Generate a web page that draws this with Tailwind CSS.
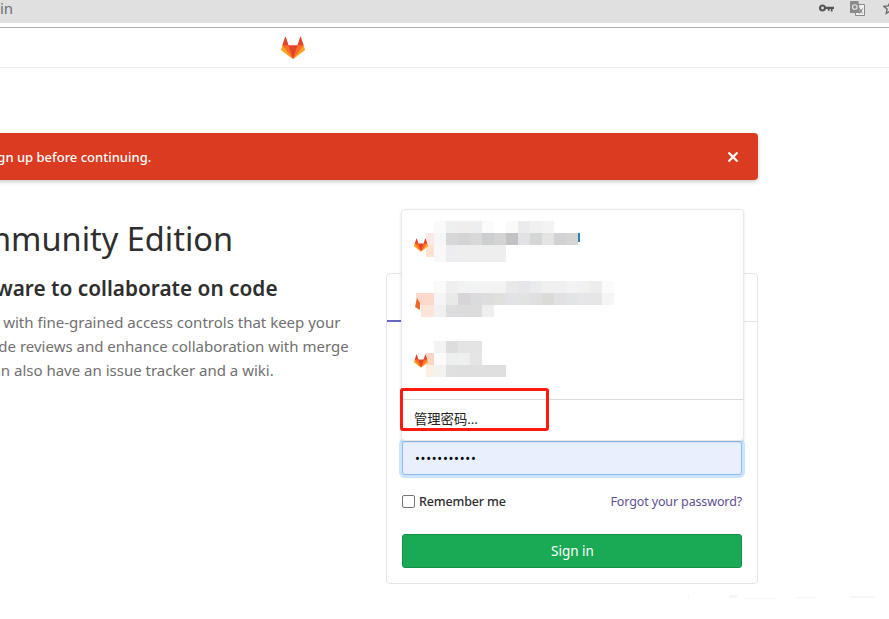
<!DOCTYPE html>
<html lang="en">
<head>
<meta charset="utf-8">
<title>Sign in · GitLab</title>
<script src="https://cdn.jsdelivr.net/npm/@tailwindcss/browser@4"></script>
</head>
<body class="bg-white overflow-hidden w-[889px] h-[619px] relative font-['Noto_Sans','Noto_Sans_CJK_SC',sans-serif] text-[#2e2e2e]">
  <!-- browser toolbar -->
  <div class="h-[23px] bg-[#e0e0e0] flex items-center justify-between">
    <span class="text-[15px] leading-none text-[#6b6f73] pb-[6px]">in</span>
    <div class="flex items-center h-full pb-[7px]">
      <svg class="w-[15px] h-[8px] mr-[16px]" viewBox="0 0 15 8"><circle cx="3.500" cy="4" r="2.500" fill="none" stroke="#555" stroke-width="2.200"/><path d="M6 2.700h9v2.300h-1.400v2.500h-1.800V5h-1.200v1.800H8.800V5H6z" fill="#555"/></svg>
      <svg class="w-[15px] h-[15px] mr-[18px]" viewBox="0 0 15 15"><path d="M5.500 3.500h9v11h-9z" fill="#efefef" stroke="#8a8a8a"/><path d="M0 0h8.500l1.500 12H0z" fill="#8b8b8b"/><circle cx="4.800" cy="6" r="2.300" fill="none" stroke="#e6e6e6" stroke-width="1.100"/><path d="M9.500 7.500l3 5M12.500 7.500l-3 5" stroke="#777" stroke-width="0.900" fill="none"/></svg>
      <svg class="w-[14px] h-[14px] mr-[-8px]" viewBox="0 0 14 14"><path d="M7 1l1.800 4 4.200.4-3.200 2.800 1 4.300L7 10.200 3.200 12.500l1-4.300L1 5.400l4.200-.4z" fill="none" stroke="#666" stroke-width="1.300"/></svg>
    </div>
  </div>
  <div class="h-[4px]"></div>
  <!-- gitlab navbar -->
  <header class="h-[41px] border-t border-t-[#ababab] border-b border-b-[#eeeeee] flex items-center pl-[281px]">
    <svg class="w-[24px] h-[24px]" viewBox="0 0 36 36">
      <path fill="#e24329" d="M2 14l9.380 9v-9l-4-12.280c-.205-.632-1.176-.632-1.380 0z"/>
      <path fill="#e24329" d="M34 14l-9.380 9v-9l4-12.280c.205-.632 1.176-.632 1.380 0z"/>
      <path fill="#e24329" d="M18 34.380 3 14h30z"/>
      <path fill="#fc6d26" d="M18 34.380 11.380 14H2l4 11z"/>
      <path fill="#fc6d26" d="M18 34.380 24.620 14H34l-4 11z"/>
      <path fill="#fca326" d="M2 14L.1 20.160c-.18.565 0 1.200.5 1.560l17.420 12.660z"/>
      <path fill="#fca326" d="M34 14l1.900 6.160c.18.565 0 1.200-.5 1.560L18 34.380z"/>
    </svg>
  </header>
  <!-- alert -->
  <div class="mt-[65px] ml-[-20px] w-[778px] h-[47px] bg-[#db3b21] rounded-[4px] shadow-[0_2px_4px_rgba(0,0,0,0.2)] flex items-center justify-between pr-[19px] text-white text-[13px] font-medium">
    <span class="whitespace-nowrap ml-[-131px] pt-[2px]">You need to sign in or sign up before continuing.</span>
    <svg class="w-[12px] h-[12px]" viewBox="0 0 12 12"><path d="M1.500 1.500l9 9M10.500 1.500l-9 9" stroke="#fff" stroke-width="2.200" fill="none"/></svg>
  </div>
  <main class="flex items-start">
    <!-- left column -->
    <section class="w-[386px] shrink-0 pt-[38px] whitespace-nowrap">
      <h1 class="text-[32.500px] leading-[42px] ml-[-167px]">GitLab Community Edition</h1>
      <h3 class="text-[20.800px] leading-[26px] font-semibold mt-[15px] ml-[-177px]">Open source software to collaborate on code</h3>
      <div class="text-[15px] leading-[24px] text-[#707070] mt-[9px]">
        <p class="ml-[-170px]">Manage Git repositories with fine-grained access controls that keep your</p>
        <p class="ml-[-155px]">code safe. Perform code reviews and enhance collaboration with merge</p>
        <p class="ml-[-174px]">requests. Each project can also have an issue tracker and a wiki.</p>
      </div>
    </section>
    <!-- sign in card -->
    <section class="w-[372px] h-[311px] mt-[93px] shrink-0 border border-[#e5e5e5] rounded-[4px] flex flex-col">
      <div class="h-[48px] shrink-0 border-b border-[#e5e5e5] flex">
        <div class="w-[186px] h-[48px] border-b-2 border-[#6666c4] text-center text-[14px] font-semibold pt-[14px]">Sign in</div>
        <div class="flex-1 text-center text-[14px] pt-[14px]">Register</div>
      </div>
      <form class="flex-1 px-[15px] flex flex-col">
        <div class="mt-[119px] h-[34px] bg-[#e8f0fe] border border-[#8dbcf5] rounded-[3px] shadow-[0_0_0_3px_rgba(128,189,255,0.4)] flex items-center pl-[12px] text-[13px] tracking-[0.700px] leading-none text-black">•••••••••••</div>
        <div class="mt-[17px] flex items-center justify-between text-[12.500px] h-[20px]">
          <label class="flex items-center font-medium text-[#2e2e2e] tracking-[-0.150px]"><span class="w-[13px] h-[13px] border border-[#767676] rounded-[2px] bg-white mr-[4px] mb-[2px]"></span>Remember me</label>
          <a class="text-[#5e4f94] tracking-[-0.130px]">Forgot your password?</a>
        </div>
        <button type="button" class="mt-[22px] h-[34px] bg-[#1aaa55] border border-[#168f48] rounded-[3px] text-white text-[13.500px] pl-[1px]">Sign in</button>
      </form>
    </section>
  </main>

  <!-- password manager popup over the card -->
  <div class="absolute left-[401px] top-[209px] w-[343px] h-[232px] bg-white border border-[#e8e8e8] rounded-[4px] shadow-[0_1px_3px_rgba(0,0,0,0.12)] flex flex-col">
    <div class="h-[190px] shrink-0 border-b border-[#dcdcdc] relative">
      <svg class="absolute left-[-1px] top-[-1px]" width="343" height="190" viewBox="401 209 343 190">
        <g>
          <rect x="434" y="221" width="12" height="12" fill="#fafafa"/><rect x="446" y="221" width="12" height="12" fill="#eef0f0"/><rect x="458" y="221" width="12" height="12" fill="#efeeed"/><rect x="470" y="221" width="12" height="12" fill="#eceef0"/><rect x="482" y="221" width="12" height="12" fill="#fbfbfb"/><rect x="506" y="221" width="12" height="12" fill="#fafaf8"/><rect x="518" y="221" width="12" height="12" fill="#ebebed"/><rect x="530" y="221" width="12" height="12" fill="#f0f0f1"/><rect x="542" y="221" width="12" height="12" fill="#f3f3f3"/>
          <rect x="578" y="233" width="2" height="9" fill="#2b7fb8"/>
          <rect x="426" y="233" width="8" height="12" fill="#fde8e8"/><rect x="434" y="233" width="12" height="12" fill="#f5f6f6"/><rect x="446" y="233" width="12" height="12" fill="#d5d8d7"/><rect x="458" y="233" width="12" height="12" fill="#d4d5d3"/><rect x="470" y="233" width="12" height="12" fill="#d7d8d8"/><rect x="482" y="233" width="12" height="12" fill="#cdcecf"/><rect x="494" y="233" width="12" height="12" fill="#d2d3d3"/><rect x="506" y="233" width="12" height="12" fill="#c2c1c4"/><rect x="518" y="233" width="12" height="12" fill="#e0e2e6"/><rect x="530" y="233" width="12" height="12" fill="#d5d6d6"/><rect x="542" y="233" width="12" height="12" fill="#e4e4e2"/><rect x="554" y="233" width="12" height="12" fill="#d2d2d4"/><rect x="566" y="233" width="12" height="12" fill="#d5d6d4"/>
          <rect x="426" y="245" width="8" height="12" fill="#fde2cf"/><rect x="434" y="245" width="12" height="17" fill="#f8f8f8"/><rect x="446" y="245" width="12" height="17" fill="#ebedf0"/><rect x="458" y="245" width="12" height="17" fill="#eeeeef"/><rect x="470" y="245" width="36" height="17" fill="#eeeeee"/>
        </g>
        <g>
          <rect x="434" y="281" width="12" height="12" fill="#fafafa"/><rect x="446" y="281" width="12" height="12" fill="#eeefee"/><rect x="458" y="281" width="12" height="12" fill="#f1f2f2"/><rect x="470" y="281" width="12" height="12" fill="#f2f3f3"/><rect x="482" y="281" width="12" height="12" fill="#f3f3f3"/><rect x="494" y="281" width="12" height="12" fill="#f3f3f2"/><rect x="506" y="281" width="12" height="12" fill="#e9e9ea"/><rect x="518" y="281" width="12" height="12" fill="#e5e6e9"/><rect x="530" y="281" width="12" height="12" fill="#eaebee"/><rect x="542" y="281" width="12" height="12" fill="#f0f0ee"/><rect x="554" y="281" width="12" height="12" fill="#f0f0f1"/><rect x="566" y="281" width="12" height="12" fill="#f0f2f4"/><rect x="578" y="281" width="12" height="12" fill="#f1f1f0"/><rect x="590" y="281" width="12" height="12" fill="#ededee"/><rect x="602" y="281" width="12" height="12" fill="#f9fbfc"/>
          <rect x="416" y="293" width="18" height="12" fill="#fcd9cb"/><rect x="434" y="293" width="12" height="12" fill="#f5f5f5"/><rect x="446" y="293" width="12" height="12" fill="#e8eae8"/><rect x="458" y="293" width="12" height="12" fill="#d8d5d9"/><rect x="470" y="293" width="12" height="12" fill="#d9dbde"/><rect x="482" y="293" width="12" height="12" fill="#dddddc"/><rect x="494" y="293" width="12" height="12" fill="#e0e0dc"/><rect x="506" y="293" width="12" height="12" fill="#e2e3e6"/><rect x="518" y="293" width="12" height="12" fill="#e1e3e3"/><rect x="530" y="293" width="12" height="12" fill="#dfdfe2"/><rect x="542" y="293" width="12" height="12" fill="#dadad7"/><rect x="554" y="293" width="12" height="12" fill="#e1e1e3"/><rect x="566" y="293" width="12" height="12" fill="#e1e5e7"/><rect x="578" y="293" width="12" height="12" fill="#e6e5e7"/><rect x="590" y="293" width="12" height="12" fill="#e6e6e8"/><rect x="602" y="293" width="12" height="12" fill="#f4f5f5"/>
          <rect x="421" y="305" width="13" height="12" fill="#fde3d8"/><rect x="434" y="305" width="12" height="12" fill="#f0f0f0"/><rect x="446" y="305" width="12" height="12" fill="#dcdde0"/><rect x="458" y="305" width="24" height="12" fill="#dcdcdd"/><rect x="482" y="305" width="12" height="12" fill="#eeeeee"/>
        </g>
        <g>
          <rect x="434" y="341" width="12" height="12" fill="#f2f3f2"/><rect x="446" y="341" width="12" height="12" fill="#dcdddd"/><rect x="458" y="341" width="24" height="12" fill="#e4e4e4"/>
          <rect x="426" y="353" width="8" height="12" fill="#fcd5c3"/><rect x="434" y="353" width="12" height="12" fill="#fbfbfb"/><rect x="446" y="353" width="12" height="12" fill="#edeeee"/><rect x="458" y="353" width="12" height="12" fill="#eef0ef"/><rect x="470" y="353" width="12" height="12" fill="#e5e5e3"/>
          <rect x="426" y="365" width="8" height="12" fill="#fdeee2"/><rect x="434" y="365" width="12" height="12" fill="#f3f2f0"/><rect x="446" y="365" width="12" height="12" fill="#dfe0e2"/><rect x="458" y="365" width="48" height="12" fill="#dfdfdf"/>
        </g>
        <g transform="translate(414 238) scale(.39)"><path fill="#e24329" d="M2 14l9.380 9v-9l-4-12.280c-.205-.632-1.176-.632-1.380 0z"/><path fill="#e24329" d="M34 14l-9.380 9v-9l4-12.280c.205-.632 1.176-.632 1.380 0z"/><path fill="#e24329" d="M18 34.380 3 14h30z"/><path fill="#fc6d26" d="M18 34.380 11.380 14H2l4 11z"/><path fill="#fc6d26" d="M18 34.380 24.620 14H34l-4 11z"/><path fill="#fca326" d="M2 14L.1 20.160c-.18.565 0 1.200.5 1.560l17.420 12.660z"/><path fill="#fca326" d="M34 14l1.900 6.160c.18.565 0 1.200-.5 1.560L18 34.380z"/></g>
        <path d="M415 307l2-9 3 5v7z" fill="#f0682a"/>
        <g transform="translate(414 354) scale(.39)"><path fill="#e24329" d="M2 14l9.380 9v-9l-4-12.280c-.205-.632-1.176-.632-1.380 0z"/><path fill="#e24329" d="M34 14l-9.380 9v-9l4-12.280c.205-.632 1.176-.632 1.380 0z"/><path fill="#e24329" d="M18 34.380 3 14h30z"/><path fill="#fc6d26" d="M18 34.380 11.380 14H2l4 11z"/><path fill="#fc6d26" d="M18 34.380 24.620 14H34l-4 11z"/><path fill="#fca326" d="M2 14L.1 20.160c-.18.565 0 1.200.5 1.560l17.420 12.660z"/><path fill="#fca326" d="M34 14l1.900 6.160c.18.565 0 1.200-.5 1.560L18 34.380z"/></g>
      </svg>
    </div>
    <div class="flex-1 flex items-center pl-[12px] text-[13.300px] text-[#222]">管理密码...</div>
  </div>
  <!-- red annotation rectangle -->
  <div class="absolute left-[400px] top-[388px] w-[149px] h-[43px] border-[3px] border-[#ff1a0f] rounded-[3px]"></div>
  <!-- faint scan speckle under the card -->
  <svg class="absolute left-[685px] top-[592px]" width="204" height="12" viewBox="0 0 204 12"><path d="M3 3h1v4H3zM44 3h8v3h-8zM60 6h30v1H60zM110 5h20v1h-20zM165 4h25v2h-25z" fill="#f6f6f6"/></svg>
</body>
</html>
